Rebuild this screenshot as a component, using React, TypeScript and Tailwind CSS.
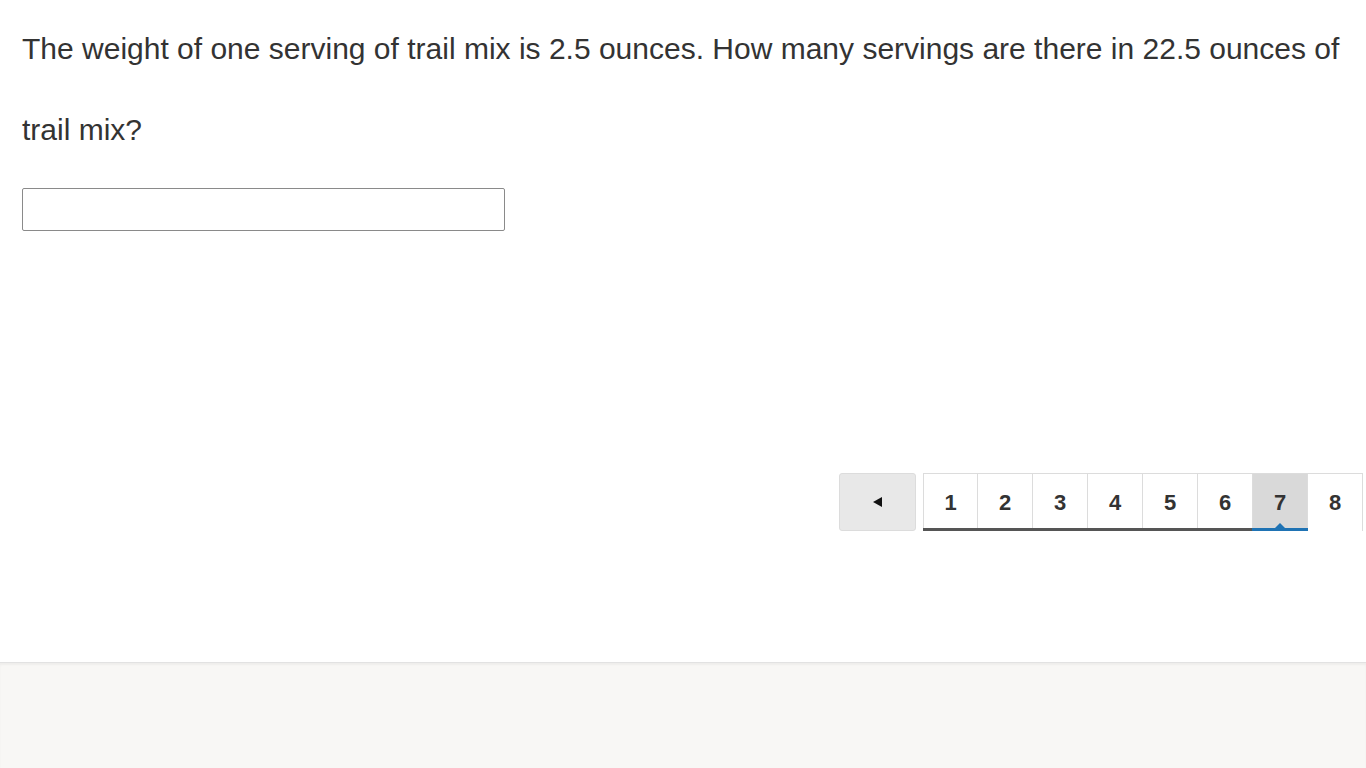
const pages = [1, 2, 3, 4, 5, 6, 7, 8];
const current = 7;

function PageButton({ n }: { n: number }) {
    const active = n === current;
    const visited = n < current;
    return (
        <div
            className={`relative flex h-[58px] w-[55px] shrink-0 items-center justify-center border-r border-t border-[#dcdcdc] text-[22px] font-bold text-[#333] ${
                active ? 'bg-[#d9d9d9]' : 'bg-white'
            } ${n === 1 ? 'border-l' : ''}`}
        >
            <span className="-mt-[1px]">{n}</span>
            {visited && <div className="absolute bottom-0 -left-px -right-px h-[3px] bg-[#555]" />}
            {active && (
                <>
                    <div className="absolute bottom-0 -left-px -right-px h-[3px] bg-[#1f73b4]" />
                    <div className="absolute bottom-[3px] left-1/2 h-0 w-0 -translate-x-1/2 border-x-[5px] border-b-[5px] border-x-transparent border-b-[#1f73b4]" />
                </>
            )}
        </div>
    );
}

export default function App() {
    return (
        <div className="flex min-h-[768px] flex-col bg-white font-['Liberation_Sans',Arial,sans-serif] text-[#333]">
            <div className="h-[662px] shrink-0 pt-[8px]">
                <div className="px-[22px]">
                    <p className="text-[30px] leading-[81px]">
                        The weight of one serving of trail mix is 2.5 ounces. How many servings are there in 22.5 ounces of trail mix?
                    </p>
                    <input
                        type="text"
                        className="mt-[18px] block h-[43px] w-[483px] rounded-[2px] border border-[#8a8a8a] bg-white px-2 text-[20px] outline-none"
                    />
                </div>

                <div className="mt-[242px] flex justify-end pr-[3px]">
                    <div className="flex items-start">
                        <button className="flex h-[58px] w-[77px] items-center justify-center rounded-[3px] border border-[#dcdcdc] bg-[#e8e8e8]">
                            <span className="h-0 w-0 border-y-[5px] border-r-[9px] border-y-transparent border-r-[#111]" />
                        </button>
                        <div className="ml-[7px] flex">
                            {pages.map((n) => (
                                <PageButton key={n} n={n} />
                            ))}
                        </div>
                    </div>
                </div>
            </div>
            <div className="flex-1 border-t border-[#e2e2e2] bg-[#f8f7f5] shadow-[inset_0_2px_2px_rgba(0,0,0,0.04)]" />
        </div>
    );
}
